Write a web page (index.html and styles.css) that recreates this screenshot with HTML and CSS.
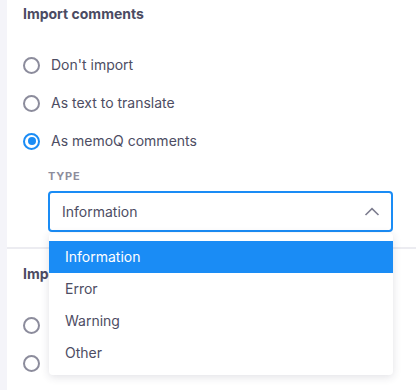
FILE: index.html
```html
<!DOCTYPE html>
<html>
<head>
<meta charset="utf-8">
<link rel="stylesheet" href="styles.css">
</head>
<body>
<div class="page">
  <div class="strip"></div>
  <div class="content">
    <section class="section first">
      <h3 class="heading">Import comments</h3>
      <div class="radio-row"><span class="radio"></span><span class="label">Don't import</span></div>
      <div class="radio-row"><span class="radio"></span><span class="label">As text to translate</span></div>
      <div class="radio-row"><span class="radio checked"></span><span class="label">As memoQ comments</span></div>
      <div class="sub">
        <div class="field-label">TYPE</div>
        <div class="select-wrap">
          <div class="select">
            <span class="select-value">Information</span>
            <svg class="chevron" width="16" height="9" viewBox="0 0 16 9"><path d="M1.5 8 L8 1.6 L14.5 8" fill="none" stroke="#7d7d8f" stroke-width="1.6"/></svg>
          </div>
          <ul class="menu">
            <li class="item active">Information</li>
            <li class="item">Error</li>
            <li class="item">Warning</li>
            <li class="item">Other</li>
          </ul>
        </div>
      </div>
    </section>
    <section class="section second">
      <h3 class="heading">Import comments</h3>
      <div class="radio-row"><span class="radio"></span><span class="label">Don't import</span></div>
      <div class="radio-row"><span class="radio"></span><span class="label">As text to translate</span></div>
    </section>
  </div>
</div>
</body>
</html>
```
FILE: styles.css
```css
* { box-sizing: border-box; }
html, body { margin: 0; padding: 0; background: #fff; }
body { font-family: Inter, "Noto Sans", sans-serif; color: #4d4d63; overflow: hidden; }
.page { display: flex; min-height: 390px; }
.strip { width: 7px; flex: none; background: #f4f4f9; }
.content { flex: 1; }
.section { padding: 0 23px 0 16px; }
.section.first { padding-top: 4px; padding-bottom: 15px; border-bottom: 2px solid #ececf1; }
.section.second { padding-top: 15px; }
.heading { margin: 0 0 22px; font-size: 14px; line-height: 20px; font-weight: 700; color: #4b4b62; }
.radio-row { display: flex; align-items: center; height: 38px; }
.radio { width: 17px; height: 17px; border: 2px solid #8c8c9c; border-radius: 50%; flex: none; margin-right: 11px; position: relative; }
.radio.checked { border-color: #1a8cf5; }
.radio.checked::after { content: ""; position: absolute; left: 2.5px; top: 2.5px; width: 8px; height: 8px; border-radius: 50%; background: #1a8cf5; }
.label { font-size: 14px; line-height: 20px; color: #4d4d63; }
.sub { padding-left: 25px; padding-top: 8px; }
.field-label { font-size: 11px; line-height: 16px; font-weight: 700; letter-spacing: 0.8px; color: #8d8d9c; margin-bottom: 7px; }
.select-wrap { position: relative; }
.select { height: 41px; border: 2px solid #1a8cf5; border-radius: 4px; display: flex; align-items: center; justify-content: space-between; padding: 0 11px 0 12px; }
.select-value { font-size: 14px; color: #4d4d63; }
.chevron { display: block; }
.menu { position: absolute; left: 1px; right: 0; top: 42px; margin: 0; padding: 8px 0 6px; list-style: none; background: #fff; border-radius: 4px; box-shadow: 0 2px 8px rgba(40, 40, 70, 0.14); z-index: 5; }
.item { height: 32px; line-height: 32px; padding-left: 16px; font-size: 14px; color: #4d4d63; }
.item.active { background: #1a8cf5; color: #fff; }
```
